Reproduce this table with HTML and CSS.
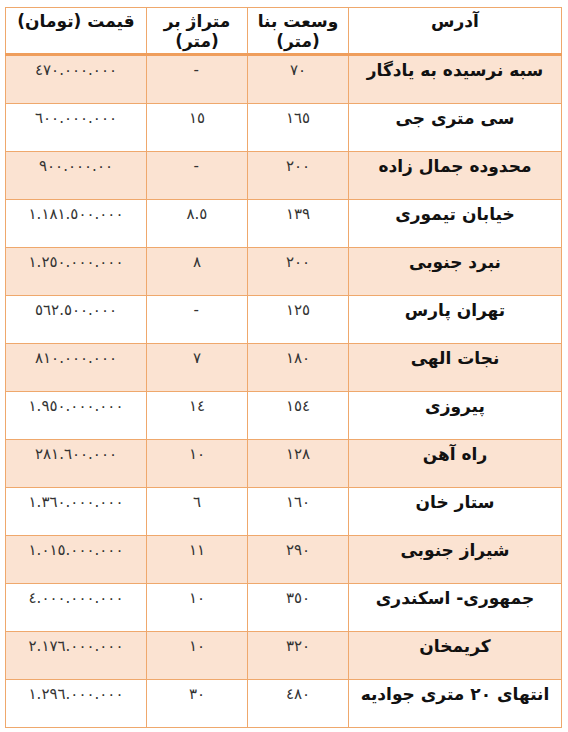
FILE: index.html
```html
<!DOCTYPE html>
<html lang="fa" dir="rtl">
<head>
<meta charset="utf-8">
<title>قیمت</title>
<link rel="stylesheet" href="styles.css">
</head>
<body>
<table class="price-table">
  <colgroup>
    <col class="c-addr"><col class="c-area"><col class="c-width"><col class="c-price">
  </colgroup>
  <thead>
    <tr class="head">
      <th>آدرس</th>
      <th>وسعت بنا<br>(متر)</th>
      <th>متراژ بر<br>(متر)</th>
      <th>قیمت (تومان)</th>
    </tr>
  </thead>
  <tbody>
    <tr class="alt"><td class="name">سبه نرسیده به یادگار</td><td>٧٠</td><td>-</td><td>٤٧٠.٠٠٠.٠٠٠</td></tr>
    <tr><td class="name">سی متری جی</td><td>١٦٥</td><td>١٥</td><td>٦٠٠.٠٠٠.٠٠٠</td></tr>
    <tr class="alt"><td class="name">محدوده جمال زاده</td><td>٢٠٠</td><td>-</td><td>٩٠٠.٠٠٠.٠٠</td></tr>
    <tr><td class="name">خیابان تیموری</td><td>١٣٩</td><td>٨.٥</td><td>١.١٨١.٥٠٠.٠٠٠</td></tr>
    <tr class="alt"><td class="name">نبرد جنوبی</td><td>٢٠٠</td><td>٨</td><td>١.٢٥٠.٠٠٠.٠٠٠</td></tr>
    <tr><td class="name">تهران پارس</td><td>١٢٥</td><td>-</td><td>٥٦٢.٥٠٠.٠٠٠</td></tr>
    <tr class="alt"><td class="name">نجات الهی</td><td>١٨٠</td><td>٧</td><td>٨١٠.٠٠٠.٠٠٠</td></tr>
    <tr><td class="name">پیروزی</td><td>١٥٤</td><td>١٤</td><td>١.٩٥٠.٠٠٠.٠٠٠</td></tr>
    <tr class="alt"><td class="name">راه آهن</td><td>١٢٨</td><td>١٠</td><td>٢٨١.٦٠٠.٠٠٠</td></tr>
    <tr><td class="name">ستار خان</td><td>١٦٠</td><td>٦</td><td>١.٣٦٠.٠٠٠.٠٠٠</td></tr>
    <tr class="alt"><td class="name">شیراز جنوبی</td><td>٢٩٠</td><td>١١</td><td>١.٠١٥.٠٠٠.٠٠٠</td></tr>
    <tr><td class="name">جمهوری- اسکندری</td><td>٣٥٠</td><td>١٠</td><td>٤.٠٠٠.٠٠٠.٠٠٠</td></tr>
    <tr class="alt"><td class="name">کریمخان</td><td>٣٢٠</td><td>١٠</td><td>٢.١٧٦.٠٠٠.٠٠٠</td></tr>
    <tr><td class="name">انتهای ٢٠ متری جوادیه</td><td>٤٨٠</td><td>٣٠</td><td>١.٢٩٦.٠٠٠.٠٠٠</td></tr>
  </tbody>
</table>
</body>
</html>
```
FILE: styles.css
```css
html, body {
  margin: 0;
  padding: 0;
  background: #ffffff;
}
body {
  font-family: "DejaVu Sans", sans-serif;
  color: #222;
  padding: 7px 6px 0 6px;
}
.price-table {
  width: 556px;
  table-layout: fixed;
  border-collapse: collapse;
  border: 1px solid #efa86c;
}
.c-addr { width: 213px; }
.c-area { width: 101px; }
.c-width { width: 101px; }
.c-price { width: 141px; }

.price-table th,
.price-table td {
  border-left: 1px solid #efa86c;
  border-right: 1px solid #efa86c;
  border-bottom: 1px solid #efa86c;
  text-align: center;
  vertical-align: top;
  padding: 4px 4px 0 4px;
}
.price-table th {
  height: 42px;
  font-size: 17px;
  font-weight: bold;
  line-height: 20px;
  color: #111;
  border-bottom: 3px solid #ef9e5c;
  padding-top: 3px;
}
.price-table td {
  height: 43px;
  font-size: 15px;
  line-height: 20px;
  letter-spacing: 1.4px;
  color: #333;
}
.price-table td.name {
  font-size: 17px;
  font-weight: bold;
  letter-spacing: 0;
  color: #111;
}
.price-table tr.alt td {
  background: #fbe3d2;
}
```
